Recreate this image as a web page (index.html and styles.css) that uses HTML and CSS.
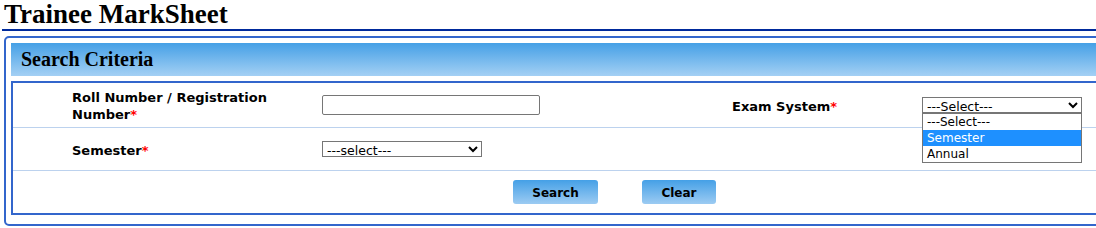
FILE: index.html
```html
<!DOCTYPE html>
<html lang="en">
<head>
  <meta charset="UTF-8">
  <title>Trainee MarkSheet</title>
  <link rel="stylesheet" href="styles.css">
</head>
<body>
  <h1 class="page-title">Trainee MarkSheet</h1>

  <div class="box">
    <div class="box-header">Search Criteria</div>

    <div class="criteria">
      <div class="row row-first">
        <label class="lbl lbl-wide">Roll Number / Registration Number<span class="req">*</span></label>
        <div class="field"><input type="text" class="txt"></div>
        <label class="lbl">Exam System<span class="req">*</span></label>
        <div class="field drop">
          <select class="sel">
            <option>---Select---</option>
            <option>Semester</option>
            <option>Annual</option>
          </select>
          <ul class="drop-list">
            <li>---Select---</li>
            <li class="active">Semester</li>
            <li>Annual</li>
          </ul>
        </div>
      </div>

      <div class="row">
        <label class="lbl">Semester<span class="req">*</span></label>
        <div class="field">
          <select class="sel">
            <option>---select---</option>
          </select>
        </div>
      </div>

      <div class="row buttons">
        <button class="btn btn-search">Search</button>
        <button class="btn btn-clear">Clear</button>
      </div>
    </div>
  </div>
</body>
</html>
```

FILE: styles.css
```css
body {
  margin: 0;
  padding: 0 0 0 2px;
  overflow-x: hidden;
  font-family: "DejaVu Sans", Verdana, sans-serif;
  color: #000;
  background: #fff;
}

.page-title {
  margin: 0;
  padding-left: 2px;
  font: bold 27px/29px "Liberation Serif", serif;
  border-bottom: 2px solid #002a9c;
}

.box {
  width: 1207px;
  margin: 5px 0 0 2px;
  padding: 5px 5px 9px;
  border: 2px solid #3366cc;
  border-radius: 5px;
}

.box-header {
  height: 28px;
  padding: 5px 0 0 10px;
  line-height: 30px;
  margin-bottom: 5px;
  background: linear-gradient(#45a0e6, #a4d0f4);
  font: bold 20px "Liberation Serif", serif;
}

.criteria {
  border: 2px solid #3366cc;
}

.row {
  display: grid;
  grid-template-columns: 250px 410px 190px 1fr;
  align-items: center;
  height: 42px;
  padding-left: 59px;
  border-bottom: 1px solid #bcd2ee;
}
.row-first { height: 44px; }

.lbl {
  padding-top: 2px;
  font-weight: bold;
  font-size: 13px;
  line-height: 17px;
}
.lbl-wide { max-width: 215px; }
.req { color: #f00; }

.field { position: relative; }

.txt {
  box-sizing: border-box;
  display: block;
  width: 218px;
  height: 20px;
  padding: 0 3px;
  border: 1px solid #767676;
  border-radius: 2px;
}

.sel {
  box-sizing: border-box;
  display: block;
  width: 160px;
  height: 16px;
  padding: 0;
  border: 1px solid #767676;
  border-radius: 0;
  background: #fff;
  font: 12.5px "DejaVu Sans", Verdana, sans-serif;
  color: #000;
}

.drop-list {
  position: absolute;
  left: 0;
  top: 16px;
  box-sizing: border-box;
  width: 160px;
  margin: 0;
  padding: 0;
  list-style: none;
  background: #fff;
  border: 1px solid #767676;
  font-size: 12px;
  line-height: 16px;
}
.drop-list li { padding-left: 4px; }
.drop-list .active { background: #1e90ff; color: #fff; }

.buttons {
  display: flex;
  justify-content: center;
  gap: 44px;
  padding-left: 0;
  border-bottom: none;
}

.btn {
  height: 24px;
  padding: 1px 0 0;
  border: none;
  border-radius: 3px;
  background: linear-gradient(#45a0e6, #9ccbf2);
  font: bold 12px "DejaVu Sans", Verdana, sans-serif;
  color: #000;
  cursor: pointer;
}
.btn-search { width: 85px; }
.btn-clear { width: 74px; }
```
